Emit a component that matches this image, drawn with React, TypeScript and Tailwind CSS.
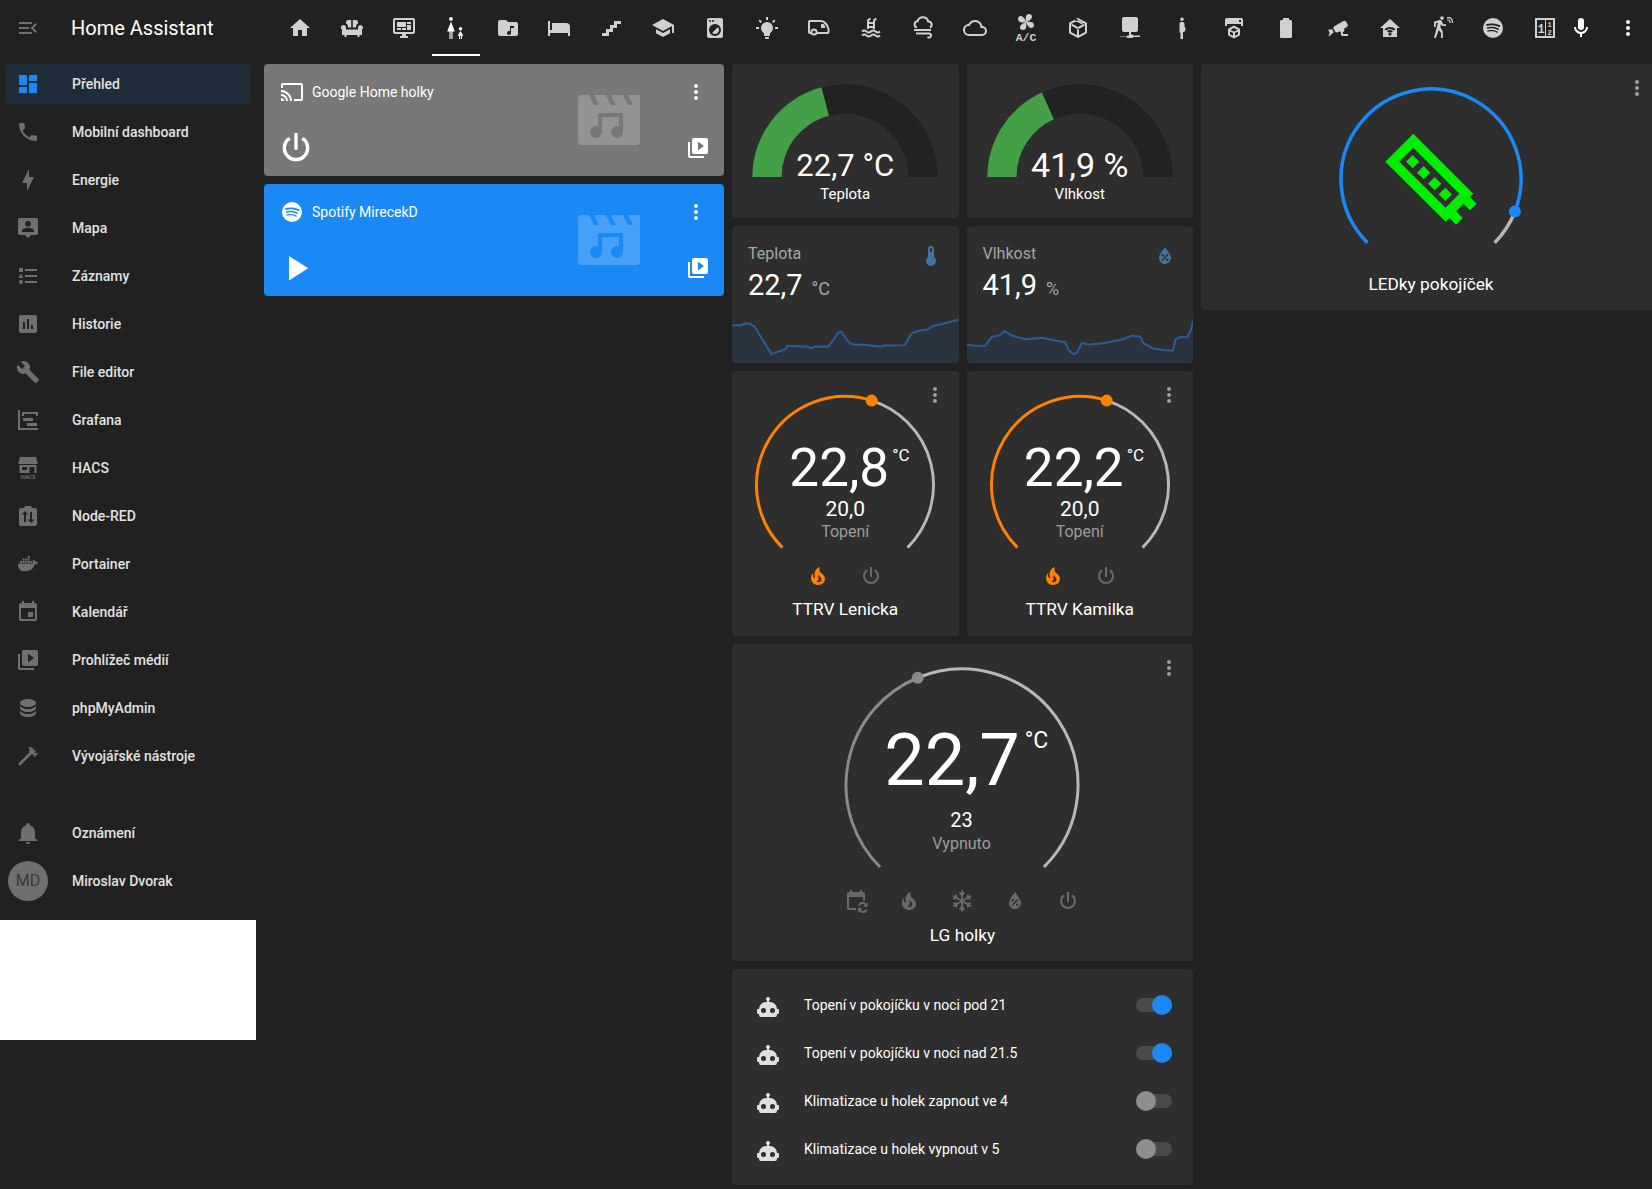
import React from "react";

const P = {
  menu: "M21,15.61L19.59,17L14.58,12L19.59,7L21,8.39L17.44,12L21,15.61M3,6H16V8H3V6M3,13V11H13V13H3M3,18V16H16V18H3Z",
  dash: "M13,3V9H21V3M13,21H21V11H13M3,21H11V15H3M3,13H11V3H3V13Z",
  phone: "M6.62,10.79C8.06,13.62 10.38,15.94 13.21,17.38L15.41,15.18C15.69,14.9 16.08,14.82 16.43,14.93C17.55,15.3 18.75,15.5 20,15.5A1,1 0 0,1 21,16.5V20A1,1 0 0,1 20,21A17,17 0 0,1 3,4A1,1 0 0,1 4,3H7.5A1,1 0 0,1 8.5,4C8.5,5.25 8.7,6.45 9.07,7.57C9.18,7.92 9.1,8.31 8.82,8.59L6.62,10.79Z",
  bolt: "M11 15H6L13 1V9H18L11 23V15Z",
  map: "M4 2h16a2 2 0 0 1 2 2v13a2 2 0 0 1-2 2h-5l-3 3-3-3H4a2 2 0 0 1-2-2V4a2 2 0 0 1 2-2zM12 5a2.8 2.8 0 1 0 0 5.6 2.8 2.8 0 0 0 0-5.6zM6 16h12v-1.3c0-2-4-3-6-3s-6 1-6 3z",
  list: "M5,9.5L7.5,14H2.5L5,9.5M3,4H7V8H3V4M5,20A2,2 0 0,0 7,18A2,2 0 0,0 5,16A2,2 0 0,0 3,18A2,2 0 0,0 5,20M9,5V7H21V5H9M9,19H21V17H9V19M9,13H21V11H9V13Z",
  chart: "M19 3H5C3.9 3 3 3.9 3 5V19C3 20.1 3.9 21 5 21H19C20.1 21 21 20.1 21 19V5C21 3.9 20.1 3 19 3M9 17H7V10H9V17M13 17H11V7H13V17M17 17H15V13H17V17Z",
  wrench: "M22.7,19L13.6,9.9C14.5,7.6 14,4.9 12.1,3C10.1,1 7.1,0.6 4.7,1.7L9,6L6,9L1.6,4.7C0.4,7.1 0.9,10.1 2.9,12.1C4.8,14 7.5,14.5 9.8,13.6L18.9,22.7C19.3,23.1 19.9,23.1 20.3,22.7L22.6,20.4C23.1,20 23.1,19.3 22.7,19Z",
  grafana: "M2,2H4V20H22V22H2V2M7,10H17V13H7V10M11,15H21V18H11V15M6,4H22V8H20V6H8V8H6V4Z",
  docker: "M21.81 10.25C21.75 10.21 21.25 9.82 20.17 9.82C19.89 9.82 19.61 9.85 19.33 9.9C19.12 8.5 17.95 7.79 17.9 7.76L17.61 7.59L17.43 7.86C17.19 8.22 17 8.63 16.92 9.05C16.72 9.85 16.84 10.61 17.25 11.26C16.76 11.54 15.96 11.61 15.79 11.61H2.62C2.28 11.61 2 11.89 2 12.23C2 13.38 2.18 14.53 2.58 15.61C3.03 16.81 3.71 17.69 4.58 18.23C5.56 18.83 7.17 19.17 9 19.17C9.82 19.17 10.64 19.09 11.45 18.95C12.58 18.74 13.66 18.35 14.66 17.77C15.5 17.29 16.23 16.67 16.86 15.95C17.91 14.76 18.54 13.44 19 12.26H19.18C20.33 12.26 21.04 11.8 21.43 11.41C21.69 11.16 21.89 10.86 22.03 10.53L22.11 10.29L21.81 10.25ZM4 9h2v2H4zM6.6 9h2v2h-2zM9.2 9h2v2h-2zM11.8 9h2v2h-2zM6.6 6.5h2v2h-2zM9.2 6.5h2v2h-2zM11.8 6.5h2v2h-2zM11.8 4h2v2h-2zM14.4 9h2v2h-2z",
  cal: "M19,19H5V8H19M16,1V3H8V1H6V3H5C3.89,3 3,3.89 3,5V19A2,2 0 0,0 5,21H19A2,2 0 0,0 21,19V5C21,3.89 20.1,3 19,3H18V1M17,12H12V17H17V12Z",
  media: "M4,6H2V20A2,2 0 0,0 4,22H18V20H4M20,2H8A2,2 0 0,0 6,4V16A2,2 0 0,0 8,18H20A2,2 0 0,0 22,16V4A2,2 0 0,0 20,2M12,14.5V5.5L18,10L12,14.5Z",
  db: "M12,3C7.58,3 4,4.79 4,7C4,9.21 7.58,11 12,11C16.42,11 20,9.21 20,7C20,4.79 16.42,3 12,3M4,9V12C4,14.21 7.58,16 12,16C16.42,16 20,14.21 20,12V9C20,11.21 16.42,13 12,13C7.58,13 4,11.21 4,9M4,14V17C4,19.21 7.58,21 12,21C16.42,21 20,19.21 20,17V14C20,16.21 16.42,18 12,18C7.58,18 4,16.21 4,14Z",
  hammer: "M2 19.63L13.43 8.2L12.72 7.5L14.14 6.07L12 3.89C13.2 2.7 15.09 2.7 16.27 3.89L19.87 7.5L18.45 8.91H21.29L22 9.62L18.45 13.21L17.74 12.5V9.62L16.27 11.04L15.56 10.33L4.13 21.76L2 19.63Z",
  bell: "M21,19V20H3V19L5,17V11C5,7.9 7.03,5.17 10,4.29C10,4.19 10,4.1 10,4A2,2 0 0,1 12,2A2,2 0 0,1 14,4C14,4.1 14,4.19 14,4.29C16.97,5.17 19,7.9 19,11V17L21,19M14,21A2,2 0 0,1 12,23A2,2 0 0,1 10,21",
  home: "M10,20V14H14V20H19V12H22L12,3L2,12H5V20H10Z",
  sofa: "M6 6.5A2.5 2.5 0 0 1 8.5 4H11.2V11.5H8V10a3.5 3.5 0 0 0-2-2.5zM18 6.5A2.5 2.5 0 0 0 15.5 4H12.8V11.5H16V10a3.5 3.5 0 0 1 2-2.5zM3.500 9a2.500 2.500 0 0 1 2.500 2.500V13.500H18V11.500A2.500 2.500 0 1 1 22 13.600V19H19.500V21H17.500V19H6.500V21H4.500V19H2V13.600A2.500 2.500 0 0 1 3.500 9z",
  monitor: "M21,16V4H3V16H21M21,2A2,2 0 0,1 23,4V16A2,2 0 0,1 21,18H14V20H16V22H8V20H10V18H3C1.89,18 1,17.1 1,16V4C1,2.89 1.89,2 3,2H21M5,6H14V11H5V6M15,6H19V8H15V6M19,9V14H15V9H19M5,12H9V14H5V12M10,12H14V14H10V12Z",
  girl: "M7 1a1.9 1.9 0 1 1 0 3.8A1.9 1.9 0 0 1 7 1zM7 5.5L3.2 15.5H5.5V23H6.6V15.5H7.4V23H8.5V15.5H10.8zM16.5 11a1.8 1.8 0 1 1 0 3.6 1.8 1.8 0 0 1 0-3.6zM16.5 15L13.6 19.8H15V23H16.1V19.8H16.9V23H18V19.8H19.4z",
  folderMusic: "M20,6H12L10,4H4A2,2 0 0,0 2,6V18A2,2 0 0,0 4,20H20A2,2 0 0,0 22,18V8A2,2 0 0,0 20,6M18,12H15V17A2,2 0 0,1 13,19A2,2 0 0,1 11,17A2,2 0 0,1 13,15C13.36,15 13.71,15.1 14,15.27V10H18V12Z",
  bed: "M19 7H5v7H3V5H1v15h2v-3h18v3h2v-9a4 4 0 0 0-4-4z",
  stairs: "M15,5V9H11V13H7V17H3V20H10V16H14V12H18V8H22V5H15Z",
  school: "M12,3L1,9L12,15L21,10.09V17H23V9M5,13.18V17.18L12,21L19,17.18V13.18L12,17L5,13.18Z",
  washer: "M14.83,11.17C16.39,12.73 16.39,15.27 14.83,16.83C13.27,18.39 10.73,18.39 9.17,16.83L14.83,11.17M6,2H18A2,2 0 0,1 20,4V20A2,2 0 0,1 18,22H6A2,2 0 0,1 4,20V4A2,2 0 0,1 6,2M7,4A1,1 0 0,0 6,5A1,1 0 0,0 7,6A1,1 0 0,0 8,5A1,1 0 0,0 7,4M10,4A1,1 0 0,0 9,5A1,1 0 0,0 10,6A1,1 0 0,0 11,5A1,1 0 0,0 10,4M12,8A6,6 0 0,0 6,14A6,6 0 0,0 12,20A6,6 0 0,0 18,14A6,6 0 0,0 12,8Z",
  bulb: "M12,6A6,6 0 0,1 18,12C18,14.22 16.79,16.16 15,17.2V19A1,1 0 0,1 14,20H10A1,1 0 0,1 9,19V17.2C7.21,16.16 6,14.22 6,12A6,6 0 0,1 12,6M14,21V22A1,1 0 0,1 13,23H11A1,1 0 0,1 10,22V21H14M20,11H23V13H20V11M1,11H4V13H1V11M13,1V4H11V1H13M4.92,3.5L7.05,5.64L5.63,7.05L3.5,4.93L4.92,3.5M16.95,5.63L19.07,3.5L20.5,4.93L18.36,7.05L16.95,5.63Z",
  cloud: "M19,18H6A4,4 0 0,1 2,14A4,4 0 0,1 6,10H6.71C7.37,7.69 9.5,6 12,6A5.5,5.5 0 0,1 17.5,11.5V12H19A3,3 0 0,1 22,15A3,3 0 0,1 19,18M19.35,10.03C18.67,6.59 15.64,4 12,4C9.11,4 6.6,5.64 5.35,8.03C2.34,8.36 0,10.9 0,14A6,6 0 0,0 6,20H19A5,5 0 0,0 24,15C24,12.36 21.95,10.22 19.35,10.03Z",
  box: "M21,16.5C21,16.88 20.79,17.21 20.47,17.38L12.57,21.82C12.41,21.94 12.21,22 12,22C11.79,22 11.59,21.94 11.43,21.82L3.53,17.38C3.21,17.21 3,16.88 3,16.5V7.5C3,7.12 3.21,6.79 3.53,6.62L11.43,2.18C11.59,2.06 11.79,2 12,2C12.21,2 12.41,2.06 12.57,2.18L20.47,6.62C20.79,6.79 21,7.12 21,7.5V16.5M12,4.15L5,8.09V15.91L12,19.85L19,15.91V8.09L12,4.15ZM11 12.5h2v7h-2zM6 7.7l6 3.4 6-3.4 1 1.7-7 4-7-4zM9 4.5l7 4 1-1.7-7-4z",
  server: "M6 1h12a2 2 0 0 1 2 2v11a2 2 0 0 1-2 2h-5v2.500h1.500l1 1H22v1.500h-6.500l-1 1h-5l-1-1H2V20.500h6.500l1-1H11V16H6a2 2 0 0 1-2-2V3a2 2 0 0 1 2-2z",
  pregnant: "M12 1.5a1.8 1.8 0 1 1 0 3.6 1.8 1.8 0 0 1 0-3.6zM10.5 6h2.5a2 2 0 0 1 1.5 2c0 1.5-.2 1.8 0 2.5.5.5 1 1.3 1 2.5s-.6 2.5-1.5 3h-1V23h-2.5v-6.5H9.5V8a2 2 0 0 1 1-2z",
  printer: "M5 2h14a2 2 0 0 1 2 2v6h-2V8H5v2H3V4a2 2 0 0 1 2-2zM17 4v2h2V4zM12 9.5l6 3.2v6.6L12 22.5l-6-3.2v-6.6zM12 12l-3.5 1.8 3.5 1.9 3.5-1.9zM8 15.4v2.8l3 1.6v-2.8zM16 15.4l-3 1.6v2.8l3-1.6z",
  battery: "M16.67,4H15V2H9V4H7.33A1.33,1.33 0 0,0 6,5.33V20.67C6,21.4 6.6,22 7.33,22H16.67A1.33,1.33 0 0,0 18,20.67V5.33C18,4.6 17.4,4 16.67,4Z",
  cctv: "M18.15,4.94C17.77,4.91 17.37,5 17,5.2L8.35,10.2C7.39,10.76 7.07,12 7.62,12.94L9.12,15.53C9.67,16.5 10.89,16.82 11.85,16.27L13.65,15.23C13.92,15.69 14.32,16.06 14.81,16.27V18.04C14.81,19.13 15.7,20 16.81,20H22V18.04H16.81V16.27C17.72,15.87 18.31,14.97 18.31,14C18.31,13.54 18.19,13.11 17.97,12.73L20.84,11.07C21.81,10.5 22.14,9.3 21.58,8.33L20.08,5.74C19.7,5.08 19,4.7 18.15,4.94M6.22,13.17L2,13.71L3.75,16.75L2.5,19.13L3.64,20.28L5.5,18.05L7.81,16.59L6.22,13.17Z",
  homeWifi: "M12 3L2 12h3v9h14v-9h3zM12 16.5a1.6 1.6 0 1 0 0 3.2 1.6 1.6 0 0 0 0-3.2zM12 11a8 8 0 0 0-5.5 2.2l1.4 1.4a6 6 0 0 1 8.2 0l1.4-1.4A8 8 0 0 0 12 11zM12 14a4.6 4.6 0 0 0-3 1.2l1.4 1.4a2.5 2.5 0 0 1 3.2 0l1.4-1.4A4.6 4.6 0 0 0 12 14z",
  walk: "M12.12,10H16V8.2H13.38L11.38,4.87C11.08,4.37 10.54,4.03 9.92,4.03C9.74,4.03 9.58,4.06 9.42,4.11L4,5.8V11H5.8V7.33L7.91,6.67L4,22H5.8L8.67,13.89L11,17V22H12.8V15.59L10.31,11.05L11.04,8.18M12,3.8C13,3.8 13.8,3 13.8,2C13.8,1 13,0.2 12,0.2C11,0.2 10.2,1 10.2,2C10.2,3 11,3.8 12,3.8ZM17 1h1.2a5 5 0 0 1 4.8 4.8V7h-1.2V5.8A3.8 3.8 0 0 0 18.2 2.2H17zM17 3.4h1a2.6 2.6 0 0 1 2.6 2.6v1h-1.2V6A1.4 1.4 0 0 0 18 4.6h-1z",
  spotify: "M17.9,10.9C14.7,9 9.35,8.8 6.3,9.75C5.8,9.9 5.3,9.6 5.15,9.15C5,8.65 5.3,8.15 5.75,8C9.3,6.95 15.15,7.15 18.85,9.35C19.3,9.6 19.45,10.2 19.2,10.65C18.95,11 18.35,11.15 17.9,10.9M17.8,13.7C17.55,14.05 17.1,14.2 16.75,13.95C14.05,12.3 9.95,11.8 6.8,12.8C6.4,12.9 5.95,12.7 5.85,12.3C5.75,11.9 5.95,11.45 6.35,11.35C10,10.25 14.5,10.8 17.6,12.7C17.9,12.85 18.05,13.35 17.8,13.7M16.6,16.45C16.4,16.75 16.05,16.85 15.75,16.65C13.4,15.2 10.45,14.9 6.95,15.7C6.6,15.8 6.3,15.55 6.2,15.25C6.1,14.9 6.35,14.6 6.65,14.5C10.45,13.65 13.75,14 16.35,15.6C16.7,15.75 16.75,16.15 16.6,16.45M12,2A10,10 0 0,0 2,12A10,10 0 0,0 12,22A10,10 0 0,0 22,12A10,10 0 0,0 12,2Z",
  mic: "M12,2A3,3 0 0,1 15,5V11A3,3 0 0,1 12,14A3,3 0 0,1 9,11V5A3,3 0 0,1 12,2M19,11C19,14.53 16.39,17.44 13,17.93V21H11V17.93C7.61,17.44 5,14.53 5,11H7A5,5 0 0,0 12,16A5,5 0 0,0 17,11H19Z",
  dots: "M12,16A2,2 0 0,1 14,18A2,2 0 0,1 12,20A2,2 0 0,1 10,18A2,2 0 0,1 12,16M12,10A2,2 0 0,1 14,12A2,2 0 0,1 12,14A2,2 0 0,1 10,12A2,2 0 0,1 12,10M12,4A2,2 0 0,1 14,6A2,2 0 0,1 12,8A2,2 0 0,1 10,6A2,2 0 0,1 12,4Z",
  power: "M16.56,5.44L15.11,6.89C16.84,7.94 18,9.83 18,12A6,6 0 0,1 12,18A6,6 0 0,1 6,12C6,9.83 7.16,7.94 8.88,6.88L7.44,5.44C5.36,6.88 4,9.28 4,12A8,8 0 0,0 12,20A8,8 0 0,0 20,12C20,9.28 18.64,6.88 16.56,5.44M13,3H11V13H13",
  cast: "M1,10V12A9,9 0 0,1 10,21H12C12,14.92 7.07,10 1,10M1,14V16A5,5 0 0,1 6,21H8A7,7 0 0,0 1,14M1,18V21H4A3,3 0 0,0 1,18M21,3H3C1.89,3 1,3.89 1,5V8H3V5H21V19H14V21H21A2,2 0 0,0 23,19V5C23,3.89 22.1,3 21,3Z",
  play: "M8,5.14V19.14L19,12.14L8,5.14Z",
  thermo: "M15 13V5A3 3 0 0 0 9 5V13A5 5 0 1 0 15 13M12 4A1 1 0 0 1 13 5V8H11V5A1 1 0 0 1 12 4Z",
  water: "M12,3.25C12,3.25 6,10 6,14C6,17.32 8.69,20 12,20A6,6 0 0,0 18,14C18,10 12,3.25 12,3.25M14.47,9.97L15.53,11.03L9.53,17.03L8.47,15.97M9.75,10A1.25,1.25 0 0,1 11,11.25A1.25,1.25 0 0,1 9.75,12.5A1.25,1.25 0 0,1 8.5,11.25A1.25,1.25 0 0,1 9.75,10M14.25,14.5A1.25,1.25 0 0,1 15.5,15.75A1.25,1.25 0 0,1 14.25,17A1.25,1.25 0 0,1 13,15.75A1.25,1.25 0 0,1 14.25,14.5Z",
  fire: "M17.66 11.2C17.43 10.9 17.15 10.64 16.89 10.38C16.22 9.78 15.46 9.35 14.82 8.72C13.33 7.26 13 4.85 13.95 3C13 3.23 12.17 3.75 11.46 4.32C8.87 6.4 7.85 10.07 9.07 13.22C9.11 13.32 9.15 13.42 9.15 13.55C9.15 13.77 9 13.97 8.8 14.05C8.57 14.15 8.33 14.09 8.14 13.93C8.08 13.88 8.04 13.83 8 13.76C6.87 12.33 6.69 10.28 7.45 8.64C5.78 10 4.87 12.3 5 14.47C5.06 14.97 5.12 15.47 5.29 15.97C5.43 16.57 5.7 17.17 6 17.7C7.08 19.43 8.95 20.67 10.96 20.92C13.1 21.19 15.39 20.8 17.03 19.32C18.86 17.66 19.5 15 18.56 12.72L18.43 12.46C18.22 12 17.66 11.2 17.66 11.2M14.5 17.5C14.22 17.74 13.76 18 13.4 18.1C12.28 18.5 11.16 17.94 10.5 17.28C11.69 17 12.4 16.12 12.61 15.23C12.78 14.43 12.46 13.77 12.33 13C12.21 12.26 12.23 11.63 12.5 10.94C12.69 11.32 12.89 11.7 13.13 12C13.9 13 15.11 13.44 15.37 14.8C15.41 14.94 15.43 15.08 15.43 15.23C15.46 16.05 15.1 16.95 14.5 17.5H14.5Z",
  robot: "M12,2A2,2 0 0,1 14,4C14,4.74 13.6,5.39 13,5.73V7H14A7,7 0 0,1 21,14H22A1,1 0 0,1 23,15V18A1,1 0 0,1 22,19H21V20A2,2 0 0,1 19,22H5A2,2 0 0,1 3,20V19H2A1,1 0 0,1 1,18V15A1,1 0 0,1 2,14H3A7,7 0 0,1 10,7H11V5.73C10.4,5.39 10,4.74 10,4A2,2 0 0,1 12,2M7.5,13A2.5,2.5 0 0,0 5,15.5A2.5,2.5 0 0,0 7.5,18A2.5,2.5 0 0,0 10,15.5A2.5,2.5 0 0,0 7.5,13M16.5,13A2.5,2.5 0 0,0 14,15.5A2.5,2.5 0 0,0 16.5,18A2.5,2.5 0 0,0 19,15.5A2.5,2.5 0 0,0 16.5,13Z",
  node: "M5 4h3.5V2h7v2H19a2 2 0 0 1 2 2v14a2 2 0 0 1-2 2H5a2 2 0 0 1-2-2V6a2 2 0 0 1 2-2zM9 7L5.5 10.5H8V18h2v-7.5h2.5zM15 19l3.5-3.5H16V8h-2v7.5h-2.5z",
  calSync: "M18 1v2h1a2 2 0 0 1 2 2v6.5h-2V8H5v11h7v2H5a2 2 0 0 1-2-2V5c0-1.11.89-2 2-2h1V1h2v2h8V1zM18.5 13a4.5 4.5 0 0 1 3.6 1.8L23.5 13.5V18h-4.5l1.7-1.7a2.6 2.6 0 0 0-4.7.7l-1.9-.5a4.5 4.5 0 0 1 4.4-3.5zM14 19h4.5l-1.7 1.7a2.6 2.6 0 0 0 4.7-.7l1.9.5a4.5 4.5 0 0 1-8 1.7L14 23.5z",
};

function Ic({ d, size = 24, className = "" }: { d: string; size?: number; className?: string }) {
  return (
    <svg width={size} height={size} viewBox="0 0 24 24" fill="currentColor" fillRule="evenodd" className={`shrink-0 ${className}`}>
      <path d={d} />
    </svg>
  );
}

function Hacs() {
  return (
    <svg width="24" height="24" viewBox="0 0 24 24" fill="currentColor" className="shrink-0">
      <path d="M4 1h16l1.5 5.5V8h-19V6.500zM3.500 9h17v8h-2v-6h-5v6h-10zM6 11h5v3H6z" fillRule="evenodd" />
      <text x="12" y="23" fontSize="5.500" textAnchor="middle" fontFamily="Roboto, sans-serif" fontWeight="700">HACS</text>
    </svg>
  );
}

const Stroke = ({ children }: { children: React.ReactNode }) => (
  <svg width="24" height="24" viewBox="0 0 24 24" fill="none" stroke="currentColor" strokeWidth="2" className="shrink-0">
    {children}
  </svg>
);

const Caravan = () => (
  <Stroke>
    <path d="M4 17H3a1 1 0 0 1-1-1V6a1 1 0 0 1 1-1h11c3.500 0 6.500 4 7.500 8V16a1 1 0 0 1-1 1H10" />
    <circle cx="7" cy="16" r="2.600" />
    <path d="M14 8h3l1.500 4H14z" fill="currentColor" stroke="none" />
  </Stroke>
);
const Pool = () => (
  <Stroke>
    <path d="M9 13V5.500A2.500 2.500 0 0 1 11.500 3M15 13V5.500A2.500 2.500 0 0 1 17.500 3M9 7h6M9 11h6" />
    <path d="M3 15.500q2.250-2 4.500 0t4.500 0 4.500 0 4.500 0M3 19.500q2.250-2 4.500 0t4.500 0 4.500 0 4.500 0" />
  </Stroke>
);
const Windy = () => (
  <Stroke>
    <path d="M6 11.500a3.200 3.200 0 0 1 .6-6.300A5.500 5.500 0 0 1 17.200 5.500a3.200 3.200 0 0 1 1.800 6" />
    <path d="M3 14h17M5 17.500h13a2 2 0 1 1-1.500 3.300" />
  </Stroke>
);
const Fan = () => (
  <svg width="26" height="30" viewBox="0 0 26 30" fill="currentColor" className="shrink-0">
    <g transform="translate(0 1)">
      <path d="M13 8c-1-5 0-8 3-8s4 3 2 5-3 2-5 3zM13 8c5-1 8 0 8 3s-3 4-5 2-2-3-3-5zM13 8c1 5 0 8-3 8s-4-3-2-5 3-2 5-3zM13 8C8 9 5 8 5 5s3-4 5-2 2 3 3 5z" />
    </g>
    <text x="13" y="28" fontSize="11.500" textAnchor="middle" fontFamily="'Liberation Mono', monospace" fontWeight="700">A/C</text>
  </svg>
);
const Frac = () => (
  <svg width="24" height="24" viewBox="0 0 24 24" fill="currentColor" className="shrink-0">
    <path fillRule="evenodd" d="M2 2h20v20H2zM4 4v16h16V4z" />
    <path d="M12 4h1v16h-1z" />
    <text x="8" y="17" fontSize="12" textAnchor="middle" fontFamily="'Liberation Mono', monospace" fontWeight="700">1</text>
    <text x="16.500" y="11" fontSize="7" textAnchor="middle" fontFamily="'Liberation Mono', monospace" fontWeight="700">1</text>
    <text x="16.500" y="18.500" fontSize="7" textAnchor="middle" fontFamily="'Liberation Mono', monospace" fontWeight="700">2</text>
  </svg>
);
const Snow = () => (
  <Stroke>
    <g strokeWidth="1.800">
      {[0, 60, 120].map((r) => (
        <g key={r} transform={`rotate(${r} 12 12)`}>
          <path d="M12 1.500v21M9.500 3.500L12 6l2.500-2.500M9.500 20.500L12 18l2.500 2.500" />
        </g>
      ))}
    </g>
  </Stroke>
);

const nav: [React.ReactNode, string][] = [
  [<Ic d={P.dash} className="text-[#1a89f5]" />, "Přehled"],
  [<Ic d={P.phone} />, "Mobilní dashboard"],
  [<Ic d={P.bolt} />, "Energie"],
  [<Ic d={P.map} />, "Mapa"],
  [<Ic d={P.list} />, "Záznamy"],
  [<Ic d={P.chart} />, "Historie"],
  [<Ic d={P.wrench} />, "File editor"],
  [<Ic d={P.grafana} />, "Grafana"],
  [<Hacs />, "HACS"],
  [<Ic d={P.node} />, "Node-RED"],
  [<Ic d={P.docker} />, "Portainer"],
  [<Ic d={P.cal} />, "Kalendář"],
  [<Ic d={P.media} />, "Prohlížeč médií"],
  [<Ic d={P.db} />, "phpMyAdmin"],
  [<Ic d={P.hammer} />, "Vývojářské nástroje"],
];

function NavItem({ icon, label, active }: { icon: React.ReactNode; label: string; active?: boolean }) {
  return (
    <div className={`mx-[6px] flex h-10 items-center rounded text-[#6f6f6f] ${active ? "bg-[#1f2c3a]" : ""}`}>
      <div className="flex w-[44px] justify-center">{icon}</div>
      <span className="ml-[22px] text-sm font-medium text-[#e1e1e1]">{label}</span>
    </div>
  );
}

function Sidebar() {
  return (
    <aside className="flex w-64 shrink-0 flex-col">
      <div className="flex h-14 items-center text-[#6f6f6f]">
        <div className="ml-4 flex w-6 justify-center">
          <Ic d={P.menu} />
        </div>
        <span className="ml-[31px] text-[20px] text-white">Home Assistant</span>
      </div>
      <nav className="mt-2 flex flex-col gap-2">
        {nav.map(([ic, l], i) => (
          <NavItem key={l} icon={ic} label={l} active={i === 0} />
        ))}
      </nav>
      <div className="mt-[37px] flex flex-col gap-2">
        <NavItem icon={<Ic d={P.bell} />} label="Oznámení" />
        <NavItem
          icon={
            <div className="flex h-10 w-10 items-center justify-center rounded-full bg-[#6f6f6f] text-base text-[#3a3a3a]">MD</div>
          }
          label="Miroslav Dvorak"
        />
      </div>
      <div className="mt-[19px] h-[120px] w-64 bg-white" />
    </aside>
  );
}

const tabs: React.ReactNode[] = [
  <Ic d={P.home} />, <Ic d={P.sofa} />, <Ic d={P.monitor} />, <Ic d={P.girl} className="text-white" />,
  <Ic d={P.folderMusic} />, <Ic d={P.bed} />, <Ic d={P.stairs} />, <Ic d={P.school} />, <Ic d={P.washer} />,
  <Ic d={P.bulb} />, <Caravan />, <Pool />, <Windy />, <Ic d={P.cloud} />, <Fan />, <Ic d={P.box} />,
  <Ic d={P.server} />, <Ic d={P.pregnant} />, <Ic d={P.printer} />, <Ic d={P.battery} />, <Ic d={P.cctv} />,
  <Ic d={P.homeWifi} />, <Ic d={P.walk} />, <Ic d={P.spotify} />, <Frac />,
];

function TopBar() {
  return (
    <header className="flex h-14 items-center pl-[18px] text-[#d0d0d0]">
      <div className="flex h-14 w-[1295px]">
        {tabs.map((t, i) => (
          <div key={i} className="relative flex h-14 w-[51.9px] shrink-0 items-center justify-center">
            {t}
            {i === 3 && <div className="absolute bottom-0 left-[2px] h-[2px] w-12 bg-white" />}
          </div>
        ))}
      </div>
      <Ic d={P.mic} className="text-white" />
      <Ic d={P.dots} className="ml-[23px] text-white" />
    </header>
  );
}

function Clapper() {
  return (
    <svg width="62" height="50" viewBox="0 0 62 50" fill="currentColor" className="absolute left-[314px] top-[31px] text-white/20">
      <path
        fillRule="evenodd"
        d="M3 0H62V47a3 3 0 0 1-3 3H3a3 3 0 0 1-3-3V3a3 3 0 0 1 3-3zM11 0h5l5 10h-5zM28 0h5l5 10h-5zM45 0h5l5 10h-5zM20 18H45V37a6 6 0 1 1-4-5.600V22H24V37a6 6 0 1 1-4-5.600z"
      />
    </svg>
  );
}

function Media({ bg, title, icon, main }: { bg: string; title: string; icon: string; main: React.ReactNode }) {
  return (
    <div className={`relative flex h-[112px] flex-col overflow-hidden rounded text-white ${bg}`}>
      <Clapper />
      <div className="flex h-14 items-center pl-4 pr-4">
        <Ic d={icon} />
        <span className="ml-2 text-sm">{title}</span>
        <Ic d={P.dots} className="ml-auto" />
      </div>
      <div className="flex flex-1 items-center justify-between pl-3 pr-[14px]">
        {main}
        <Ic d={P.media} />
      </div>
    </div>
  );
}

const ring = (cx: number, cy: number, ro: number, ri: number, deg: number) => {
  const a = (deg * Math.PI) / 180;
  const c = Math.cos(a);
  const s = Math.sin(a);
  return `M${cx - ro} ${cy}A${ro} ${ro} 0 0 1 ${cx - ro * c} ${cy - ro * s}L${cx - ri * c} ${cy - ri * s}A${ri} ${ri} 0 0 0 ${cx - ri} ${cy}Z`;
};

function Gauge({ deg, value, name, vClass }: { deg: number; value: string; name: string; vClass: string }) {
  return (
    <div className="relative flex h-[154px] flex-col items-center rounded bg-[#2e2e2e]">
      <svg width="190" height="96" viewBox="0 0 190 96" className="mt-[17px]">
        <path d={ring(95, 96, 92.7, 63.4, 180)} fill="#222222" />
        <path d={ring(95, 96, 92.7, 63.4, deg)} fill="#43a047" />
      </svg>
      <div className={`absolute inset-x-0 text-center leading-none text-white ${vClass}`}>{value}</div>
      <div className="mt-[7px] text-[15px] leading-5 text-white">{name}</div>
    </div>
  );
}

function Sensor({ name, value, unit, icon, line }: { name: string; value: string; unit: string; icon: string; line: string }) {
  const pts = line.trim();
  const first = pts.split(" ")[0].split(",")[0];
  const last = pts.split(" ").pop()!.split(",")[0];
  return (
    <div className="flex h-[137px] flex-col overflow-hidden rounded bg-[#2e2e2e]">
      <div className="flex items-start justify-between pl-4 pr-4 pt-[18px]">
        <div>
          <div className="text-base leading-5 text-[#a6a6a6]">{name}</div>
          <div className="mt-[5px] flex items-baseline leading-8 text-white">
            <span className="text-[29px]">{value}</span>
            <span className="ml-[9px] text-[18px] text-[#a6a6a6]">{unit}</span>
          </div>
        </div>
        <Ic d={icon} className="text-[#44739e]" />
      </div>
      <svg viewBox={`${first} 770 ${Number(last) - Number(first)} 139`} preserveAspectRatio="none" className="mt-auto h-[46px] w-full">
        <polygon points={`${first},909 ${pts} ${last},909`} fill="#2a3440" />
        <polyline points={pts} fill="none" stroke="#2a5d96" strokeWidth="6" />
      </svg>
    </div>
  );
}

const arcPt = (cx: number, cy: number, r: number, f: number) => {
  const a = ((-135 + 270 * f) * Math.PI) / 180;
  return [cx + r * Math.sin(a), cy - r * Math.cos(a)];
};
const arcD = (cx: number, cy: number, r: number, f0: number, f1: number) => {
  const [x0, y0] = arcPt(cx, cy, r, f0);
  const [x1, y1] = arcPt(cx, cy, r, f1);
  return `M${x0} ${y0}A${r} ${r} 0 ${(f1 - f0) * 270 > 180 ? 1 : 0} 1 ${x1} ${y1}`;
};

function Dial({ size, r, f, colorA, colorB, handle, sw = 3 }: { size: number; r: number; f: number; colorA: string; colorB: string; handle: number; sw?: number }) {
  const c = size / 2;
  const [hx, hy] = arcPt(c, c, r, f);
  return (
    <svg width={size} height={size} viewBox={`0 0 ${size} ${size}`} className="absolute left-0 top-0">
      <path d={arcD(c, c, r, f, 1)} fill="none" stroke={colorB} strokeWidth={sw} />
      <path d={arcD(c, c, r, 0, f)} fill="none" stroke={colorA} strokeWidth={sw} />
      <circle cx={hx} cy={hy} r={handle} fill={colorA} />
    </svg>
  );
}

const Dots = ({ className }: { className: string }) => <Ic d={P.dots} className={`absolute text-[#a0a0a0] ${className}`} />;

function Ttrv({ value, name, f }: { value: string; name: string; f: number }) {
  return (
    <div className="relative flex h-[265px] flex-col items-center rounded bg-[#2e2e2e]">
      <Dots className="right-3 top-3" />
      <div className="relative mt-[14px] h-[176px] w-[200px]">
        <Dial size={200} r={88.500} f={f} colorA="#ff8100" colorB="#b8b8b8" handle={6} />
        <div className="absolute inset-x-0 top-[58px] flex flex-col items-center">
          <div className="relative mr-[12px] text-[53px] leading-[50px] text-white">
            {value}
            <span className="absolute left-full top-[2px] ml-[3px] text-[17px] leading-5">°C</span>
          </div>
          <div className="mt-[4px] text-[21px] leading-6 text-white">20,0</div>
          <div className="mt-[1px] text-base leading-5 text-[#9c9c9c]">Topení</div>
        </div>
      </div>
      <div className="mt-[3px] flex gap-[29px] pr-[1px]">
        <Ic d={P.fire} className="text-[#ff8100]" />
        <Ic d={P.power} className="text-[#6a6a6a]" />
      </div>
      <div className="mt-[9px] text-[17.300px] leading-6 text-white">{name}</div>
    </div>
  );
}

function LgCard() {
  return (
    <div className="relative flex h-[317px] flex-col items-center rounded bg-[#2e2e2e]">
      <Dots className="right-3 top-3" />
      <div className="relative mr-[2px] mt-[13px] h-[224px] w-[256px]">
        <Dial size={256} r={116} f={0.417} colorA="#8a8a8a" colorB="#b8b8b8" handle={6} />
        <div className="absolute inset-x-0 top-[66px] flex flex-col items-center">
          <div className="relative mr-[19px] text-[72px] leading-[76px] text-white">
            22,7
            <span className="absolute left-full top-[4px] ml-[5px] text-[23px] leading-7">°C</span>
          </div>
          <div className="mt-[9px] text-[20px] leading-6 text-white">23</div>
          <div className="mt-[2px] text-base leading-5 text-[#9c9c9c]">Vypnuto</div>
        </div>
      </div>
      <div className="mr-[2px] mt-[8px] flex gap-[29px] text-[#6a6a6a]">
        <Ic d={P.calSync} />
        <Ic d={P.fire} />
        <Snow />
        <Ic d={P.water} />
        <Ic d={P.power} />
      </div>
      <div className="mt-[10px] text-[17.300px] leading-6 text-white">LG holky</div>
    </div>
  );
}

function Automation({ label, on }: { label: string; on: boolean }) {
  return (
    <div className="flex h-12 items-center">
      <Ic d={P.robot} className="ml-6 mt-[4px] text-[#e1e1e1]" />
      <span className="ml-[24px] text-sm text-white">{label}</span>
      <div className="relative ml-auto mr-[21px] h-[14px] w-9 rounded-full bg-[#4a4a4a]">
        <div className={`absolute top-[-3px] h-5 w-5 rounded-full ${on ? "right-0 bg-[#1a89f5]" : "left-0 bg-[#8e8e8e]"}`} />
      </div>
    </div>
  );
}

function LedIcon() {
  return (
    <svg width="100" height="100" viewBox="0 0 300 300" fill="#00ee00" className="relative">
      <path
        transform="translate(-558 -206)"
        fillRule="evenodd"
        d="M655 220L571 304L752 484L835 400zM655 262L793 400L752 442L613 304zM653 284L673 304L653 324L633 304zM686 317L706 337L686 357L666 337zM719 350L739 370L719 390L699 370zM751 382L771 402L751 422L731 402zM825 410L845 430L825 450L805 430zM783 453L803 473L783 493L763 473z"
      />
    </svg>
  );
}

function LedCard() {
  return (
    <div className="relative flex h-[246px] flex-col items-center rounded bg-[#2e2e2e]">
      <Dots className="right-3 top-3" />
      <div className="relative mt-[15px] flex h-[200px] w-[200px] items-center justify-center">
        <Dial size={200} r={90} f={0.912} colorA="#1a89f5" colorB="#b8b8b8" handle={6} sw={3.500} />
        <LedIcon />
      </div>
      <div className="mt-[-7px] text-[17.300px] leading-6 text-white">LEDky pokojíček</div>
    </div>
  );
}

const tempLine =
  "21,795 50,795 60,789 75,790 90,800 105,825 120,850 140,882 155,876 180,868 188,857 250,860 260,865 270,859 310,860 325,840 340,818 350,814 360,830 375,850 390,854 410,853 470,860 480,856 540,855 560,820 580,812 610,808 625,797 650,792 702,778";
const humLine =
  "726,854 760,858 780,858 800,830 825,825 838,812 860,826 900,837 950,833 1010,845 1020,845 1030,870 1045,882 1055,878 1070,848 1090,853 1130,850 1190,838 1220,826 1245,830 1255,850 1285,866 1320,870 1342,872 1350,838 1365,830 1385,832 1395,812 1404,778";

export default function App() {
  return (
    <div className="flex h-[1189px] w-[1652px] overflow-hidden bg-[#212121] font-['Roboto',sans-serif]">
      <Sidebar />
      <main className="min-w-0 flex-1">
        <TopBar />
        <div className="grid w-[1405px] grid-cols-[460px_461px_460px] items-start gap-2 p-2">
          <div className="flex flex-col gap-2">
            <Media bg="bg-[#787878]" title="Google Home holky" icon={P.cast} main={<Ic d={P.power} size={40} />} />
            <Media bg="bg-[#1a89f5]" title="Spotify MirecekD" icon={P.spotify} main={<Ic d={P.play} size={42} className="-ml-[1px]" />} />
          </div>
          <div className="flex flex-col gap-2">
            <div className="grid grid-cols-2 gap-2">
              <Gauge deg={75.3} value="22,7 °C" name="Teplota" vClass="top-[86px] text-[31px]" />
              <Gauge deg={65.7} value="41,9 %" name="Vlhkost" vClass="top-[84px] text-[34px]" />
              <Sensor name="Teplota" value="22,7" unit="°C" icon={P.thermo} line={tempLine} />
              <Sensor name="Vlhkost" value="41,9" unit="%" icon={P.water} line={humLine} />
              <Ttrv value="22,8" name="TTRV Lenicka" f={0.565} />
              <Ttrv value="22,2" name="TTRV Kamilka" f={0.565} />
            </div>
            <LgCard />
            <div className="flex h-[216px] flex-col justify-center rounded bg-[#2e2e2e]">
              <Automation label="Topení v pokojíčku v noci pod 21" on />
              <Automation label="Topení v pokojíčku v noci nad 21.5" on />
              <Automation label="Klimatizace u holek zapnout ve 4" on={false} />
              <Automation label="Klimatizace u holek vypnout v 5" on={false} />
            </div>
          </div>
          <LedCard />
        </div>
      </main>
    </div>
  );
}
